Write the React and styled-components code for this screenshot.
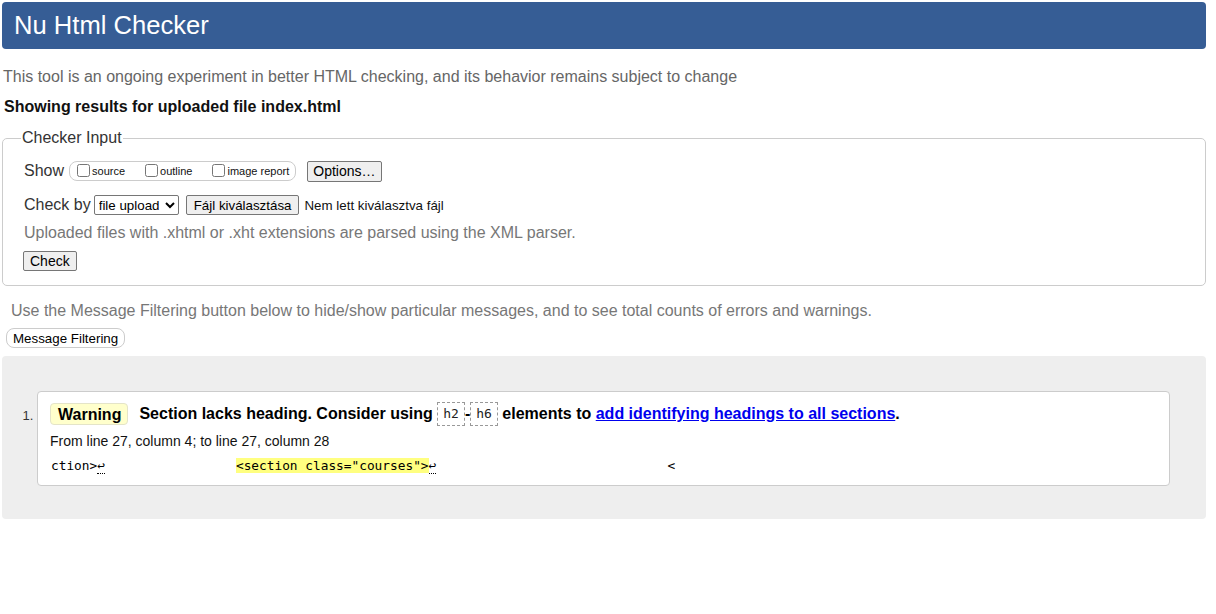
import styled, { createGlobalStyle } from "styled-components";

const GlobalStyle = createGlobalStyle`
  html, body {
    margin: 0;
    padding: 0;
    background: #fff;
  }
  body {
    font-family: "Liberation Sans", Arial, sans-serif;
    font-size: 16px;
    color: #000;
  }
`;

const Page = styled.div`
  padding: 2px;
  width: 1204px;
`;

const Title = styled.h1`
  margin: 0;
  height: 47px;
  line-height: 46px;
  padding: 0 12px;
  background: #365d95;
  color: #fff;
  font-size: 25.6px;
  font-weight: normal;
  border-radius: 4px;
`;

const Intro = styled.p`
  margin: 18px 0 0 1px;
  line-height: 20px;
  color: #666;
`;

const Showing = styled.p`
  margin: 10px 0 0 2px;
  line-height: 20px;
  font-weight: bold;
  color: #111;
`;

const Fieldset = styled.fieldset`
  margin: 11px 0 0 0;
  padding: 0 20px 14px 21px;
  border: 1px solid #ccc;
  border-radius: 5px;
  min-width: 0;
`;

const Legend = styled.legend`
  margin-left: -3px;
  padding: 0 1px;
  line-height: 20px;
  color: #333;
`;

const Row = styled.div`
  display: flex;
  align-items: center;
  height: 22px;
  margin-top: ${({ $top }) => $top}px;
  color: #333;
`;

const RowLabel = styled.span`
  margin-right: ${({ $gap }) => $gap}px;
`;

const OptionGroup = styled.span`
  display: inline-flex;
  align-items: center;
  height: 18px;
  padding: 0 6px 0 7px;
  border: 1px solid #ccc;
  border-radius: 8px;
  gap: 20px;
  margin-right: 11px;
`;

const Option = styled.label`
  display: inline-flex;
  align-items: center;
  font-size: 11px;
  color: #111;

  input {
    margin: 0 2px 1px 0;
    width: 13px;
    height: 13px;
  }
`;

const Button = styled.button`
  font-family: "Liberation Sans", Arial, sans-serif;
  font-size: ${({ $size }) => $size || 14}px;
  color: #000;
  background: #efefef;
  border: 1px solid #767676;
  border-radius: 2px;
  height: ${({ $h }) => $h || 21}px;
  padding: 0 ${({ $px }) => $px || 6}px;
`;

const Select = styled.select`
  font-family: "Liberation Sans", Arial, sans-serif;
  font-size: 13.33px;
  width: 85px;
  height: 20px;
  margin-right: 7px;
  border: 1px solid #767676;
  border-radius: 2px;
  background: #fff;
  color: #000;
`;

const FileNote = styled.span`
  margin-left: 5px;
  font-size: 13.33px;
  color: #111;
`;

const Hint = styled.p`
  margin: 7px 0 0 0;
  line-height: 20px;
  color: #777;
`;

const ButtonRow = styled.div`
  margin-top: 8px;
  margin-left: -1px;
  display: flex;
`;

const FilterNote = styled.p`
  margin: 15px 0 0 9px;
  line-height: 20px;
  color: #777;
`;

const FilterButton = styled.button`
  margin: 7px 0 0 4px;
  height: 20px;
  padding: 0 6px;
  font-family: "Liberation Sans", Arial, sans-serif;
  font-size: 13.33px;
  color: #000;
  background: #fff;
  border: 1px solid #ccc;
  border-radius: 8px;
`;

const Results = styled.div`
  margin-top: 8px;
  background: #eee;
  border-radius: 4px;
  padding: 35px 36px 33px 35px;
`;

const List = styled.ol`
  margin: 0;
  padding: 0;
`;

const Item = styled.li`
  background: #fff;
  border: 1px solid #ccc;
  border-radius: 4px;
  padding: 10px 12px 10px 12px;

  &::marker {
    font-size: 13px;
    color: #333;
  }
`;

const MessageLine = styled.p`
  margin: 0;
  display: flex;
  align-items: center;
  height: 24px;
  font-weight: bold;
  color: #000;
  white-space: pre;
`;

const Badge = styled.strong`
  display: inline-block;
  height: 22px;
  line-height: 21px;
  padding: 0 6px 0 7px;
  margin-right: 11px;
  background: #ffc;
  border: 1px solid #e4e4c8;
  border-radius: 4px;
  box-sizing: border-box;
`;

const Code = styled.code`
  display: inline-block;
  height: 24px;
  line-height: 22px;
  box-sizing: border-box;
  padding: 0 5px;
  border: 1px dashed #999;
  font-family: "DejaVu Sans Mono", monospace;
  font-size: 13px;
  font-weight: normal;
  color: #222;
`;

const Link = styled.a`
  color: #0000ee;
  text-decoration: underline;
`;

const Location = styled.p`
  margin: 6px 0 0 0;
  line-height: 18px;
  font-size: 14px;
  color: #111;
`;

const Extract = styled.p`
  margin: 7px 0 0 1px;
  line-height: 18px;
  font-family: "DejaVu Sans Mono", monospace;
  font-size: 12.8px;
  white-space: pre;
  color: #000;
`;

const Mark = styled.mark`
  background: #ffff80;
  color: #000;
`;

const LineFeed = styled.b`
  font-weight: normal;
  border-bottom: 1px dotted #000;
`;

const App = () => {
  return (
    <>
      <GlobalStyle />
      <Page>
        <Title>Nu Html Checker</Title>
        <Intro>
          This tool is an ongoing experiment in better HTML checking, and its
          behavior remains subject to change
        </Intro>
        <Showing>Showing results for uploaded file index.html</Showing>

        <Fieldset>
          <Legend>Checker Input</Legend>
          <Row $top={12}>
            <RowLabel $gap={5}>Show</RowLabel>
            <OptionGroup>
              <Option>
                <input type="checkbox" />
                source
              </Option>
              <Option>
                <input type="checkbox" />
                outline
              </Option>
              <Option>
                <input type="checkbox" />
                image report
              </Option>
            </OptionGroup>
            <Button $px={5}>Options…</Button>
          </Row>
          <Row $top={12}>
            <RowLabel $gap={3}>Check by</RowLabel>
            <Select defaultValue="file">
              <option value="file">file upload</option>
              <option value="address">address</option>
              <option value="text">text input</option>
            </Select>
            <Button $size={13.33} $h={20} $px={7}>
              Fájl kiválasztása
            </Button>
            <FileNote>Nem lett kiválasztva fájl</FileNote>
          </Row>
          <Hint>
            Uploaded files with .xhtml or .xht extensions are parsed using the
            XML parser.
          </Hint>
          <ButtonRow>
            <Button $h={20} $px={6}>
              Check
            </Button>
          </ButtonRow>
        </Fieldset>

        <FilterNote>
          Use the Message Filtering button below to hide/show particular
          messages, and to see total counts of errors and warnings.
        </FilterNote>
        <FilterButton>Message Filtering</FilterButton>

        <Results>
          <List>
            <Item>
              <MessageLine>
                <Badge>Warning</Badge>
                <span>Section lacks heading. Consider using </span>
                <Code>h2</Code>-<Code>h6</Code>
                <span> elements to </span>
                <Link href="#">add identifying headings to all sections</Link>
                <span>.</span>
              </MessageLine>
              <Location>From line 27, column 4; to line 27, column 28</Location>
              <Extract>
                {"ction>"}
                <LineFeed>↩</LineFeed>
                {" ".repeat(17)}
                <Mark>{'<section class="courses">'}</Mark>
                <LineFeed>↩</LineFeed>
                {" ".repeat(30)}
                {"<"}
              </Extract>
            </Item>
          </List>
        </Results>
      </Page>
    </>
  );
};

export default App;
